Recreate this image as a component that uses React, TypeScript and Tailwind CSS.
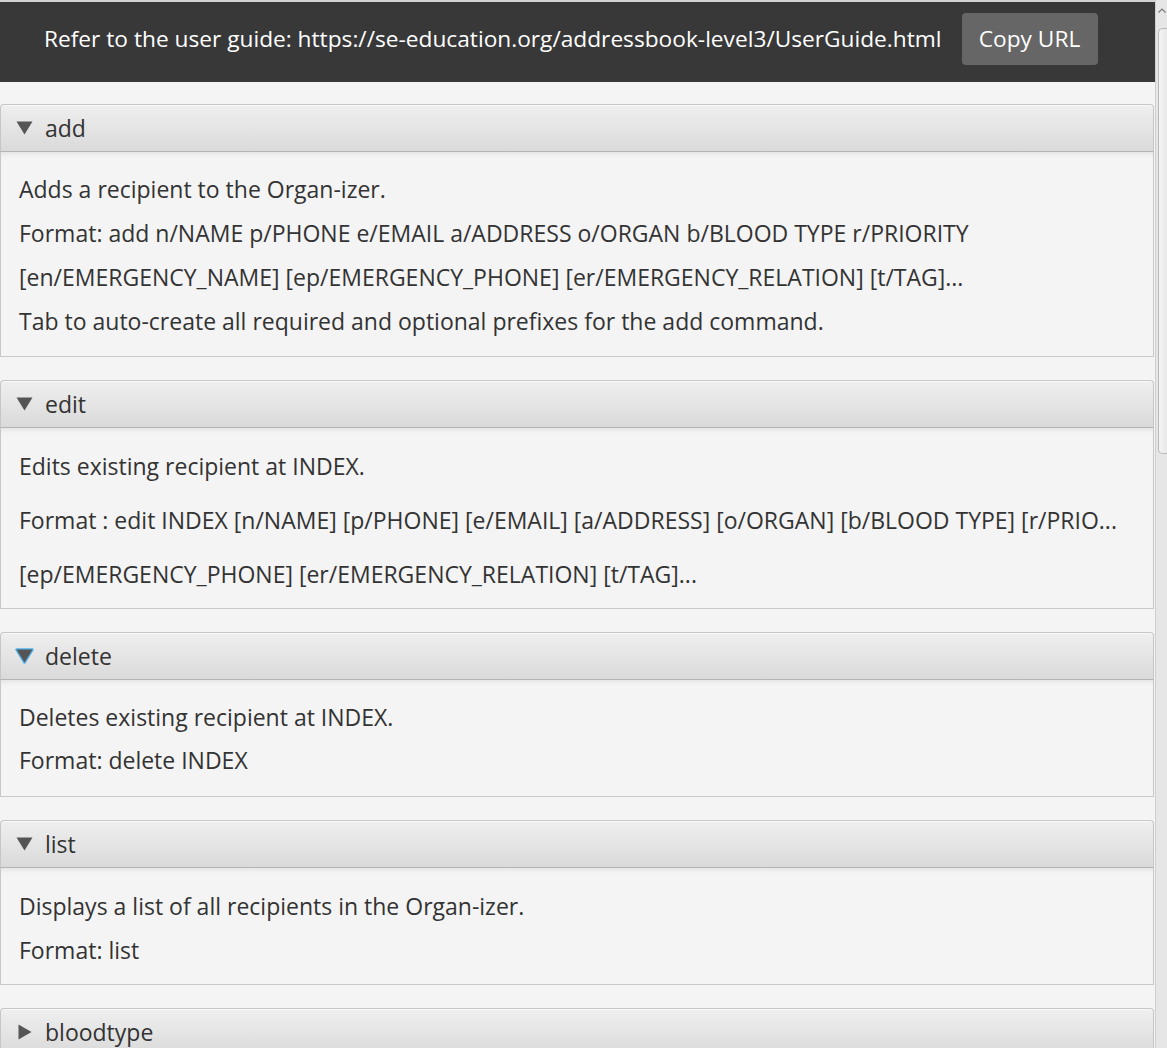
import type { ReactNode } from 'react';

function Arrow({ open, focused }: { open: boolean; focused?: boolean }) {
  return (
    <span className="w-[17px] h-[17px] flex items-center justify-center">
      {open ? (
        <svg width="19" height="16" viewBox="-1 -1 19 16" className="overflow-visible">
          {focused && (
            <polygon
              points="0.5,0.5 16.5,0.5 8.5,13.5"
              fill="none"
              stroke="#1ea3f0"
              strokeOpacity="0.75"
              strokeWidth="2.5"
              strokeLinejoin="round"
            />
          )}
          <polygon points="0.5,0.5 16.5,0.5 8.5,13.5" fill="#555555" />
        </svg>
      ) : (
        <svg width="14" height="16" viewBox="0 0 14 16">
          <polygon points="0.5,0.5 13.5,8 0.5,15.5" fill="#555555" />
        </svg>
      )}
    </span>
  );
}

function Pane({
  title,
  open = true,
  focused,
  children,
  bodyClass = '',
}: {
  title: string;
  open?: boolean;
  focused?: boolean;
  children?: ReactNode;
  bodyClass?: string;
}) {
  return (
    <section className="w-[1154px] flex flex-col">
      <div className="h-[48px] flex items-center gap-[12px] pl-[15px] rounded-t-[4px] border border-[#c6c6c6] border-b-[#b4b4b4] bg-gradient-to-b from-[#efefef] to-[#dadada] shadow-[inset_0_1px_0_#fafafa]">
        <Arrow open={open} focused={focused} />
        <span className="text-[23px] text-[#333333] leading-none">{title}</span>
      </div>
      {open && (
        <div
          className={`border-x border-b border-[#c8c8c8] bg-[#f4f4f4] pl-[18px] text-[23px] text-[#333333] shadow-[inset_0_6px_6px_-6px_rgba(0,0,0,0.12)] ${bodyClass}`}
        >
          {children}
        </div>
      )}
    </section>
  );
}

export default function App() {
  return (
    <div className="w-[1167px] h-[1048px] overflow-hidden bg-[#f4f4f4] flex font-['Open_Sans',sans-serif]">
      <div className="w-[1155px] flex flex-col">
        <div className="border-t-2 border-[#d2d2d2]">
          <div className="h-[80px] bg-[#383838] flex items-start pt-[11px] pl-[44px]">
            <span className="h-[52px] flex items-center text-[22.7px] text-white">
              Refer to the user guide: https://se-education.org/addressbook-level3/UserGuide.html
            </span>
            <button className="ml-[20px] h-[52px] w-[136px] rounded-[4px] bg-[#666666] text-[22.7px] text-white">
              Copy URL
            </button>
          </div>
        </div>

        <div className="pt-[22px] flex flex-col gap-[23px]">
          <Pane title="add" bodyClass="pt-[15px] pb-[13px] leading-[44px]">
            <p>Adds a recipient to the Organ-izer.</p>
            <p>Format: add n/NAME p/PHONE e/EMAIL a/ADDRESS o/ORGAN b/BLOOD TYPE r/PRIORITY</p>
            <p>[en/EMERGENCY_NAME] [ep/EMERGENCY_PHONE] [er/EMERGENCY_RELATION] [t/TAG]...</p>
            <p>Tab to auto-create all required and optional prefixes for the add command.</p>
          </Pane>

          <Pane title="edit" bodyClass="pt-[11px] pb-[7px] leading-[54px]">
            <p>Edits existing recipient at INDEX.</p>
            <p className="whitespace-nowrap">
              Format : edit INDEX [n/NAME] [p/PHONE] [e/EMAIL] [a/ADDRESS] [o/ORGAN] [b/BLOOD TYPE] [r/PRIO...
            </p>
            <p>[ep/EMERGENCY_PHONE] [er/EMERGENCY_RELATION] [t/TAG]...</p>
          </Pane>

          <Pane title="delete" focused bodyClass="pt-[16px] pb-[14px] leading-[43px]">
            <p>Deletes existing recipient at INDEX.</p>
            <p>Format: delete INDEX</p>
          </Pane>

          <Pane title="list" bodyClass="pt-[16px] pb-[12px] leading-[44px]">
            <p>Displays a list of all recipients in the Organ-izer.</p>
            <p>Format: list</p>
          </Pane>

          <Pane title="bloodtype" open={false} />
        </div>
      </div>

      {/* scrollbar */}
      <div className="w-[12px] bg-[#e6e6e6] border-l border-[#cfcfcf] flex flex-col">
        <div className="h-[28px] flex items-start justify-center pt-[8px]">
          <svg width="8" height="5" viewBox="0 0 8 5">
            <polyline points="0.5,4.5 4,1 7.5,4.5" fill="none" stroke="#7a7a7a" strokeWidth="1.2" />
          </svg>
        </div>
        <div className="ml-[2px] h-[426px] rounded-l-[5px] border border-r-0 border-[#b9b9b9] bg-gradient-to-r from-[#f4f4f4] to-[#e8e8e8]" />
      </div>
    </div>
  );
}
